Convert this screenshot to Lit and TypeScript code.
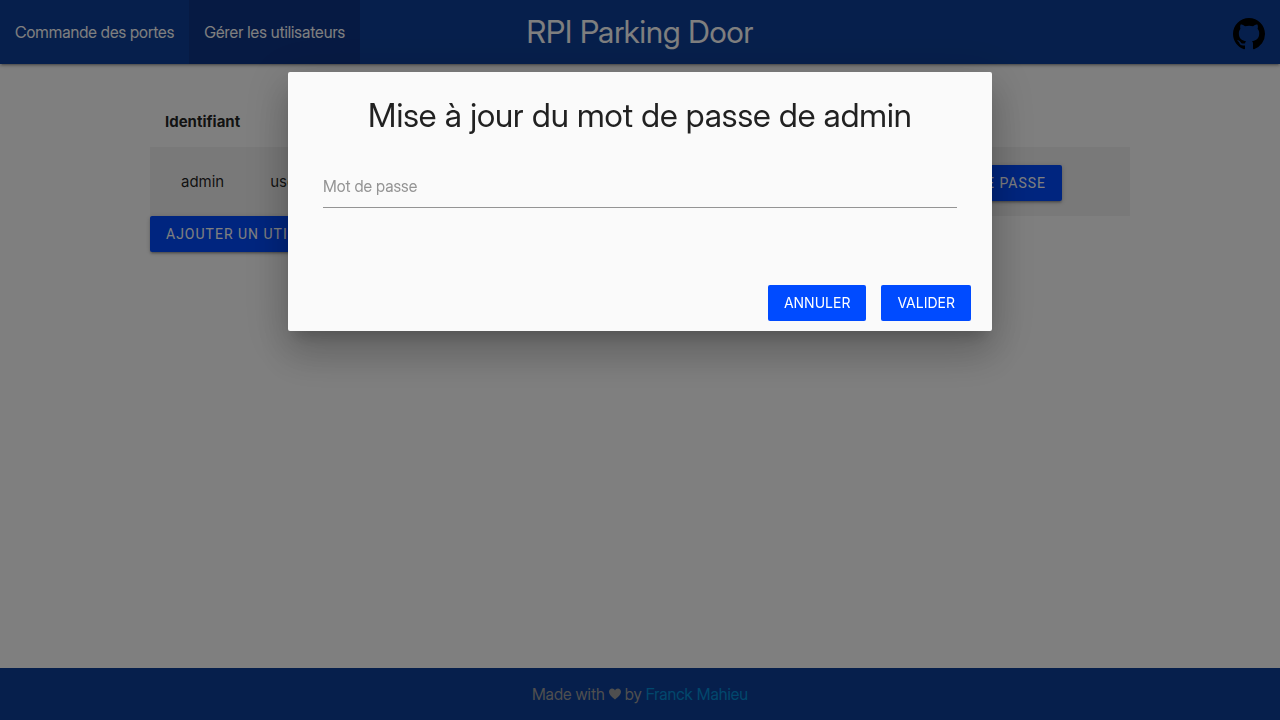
import { LitElement, html, css } from "lit";
import { customElement, state } from "lit/decorators.js";

@customElement("app-root")
export class AppRoot extends LitElement {
  static styles = css`
    :host {
      display: flex;
      flex-direction: column;
      min-height: 100vh;
      background: #fff;
      color: rgba(0, 0, 0, 0.87);
      font-family: "Inter Display", Inter, sans-serif;
      font-size: 16px;
      line-height: 22px;
    }
    a {
      color: inherit;
      text-decoration: none;
    }
    .nav {
      display: grid;
      grid-template-columns: 1fr auto 1fr;
      align-items: center;
      height: 64px;
      line-height: 64px;
      background: #0d3f98;
      color: #fff;
      box-shadow: 0 2px 2px rgba(0, 0, 0, 0.14), 0 3px 1px -2px rgba(0, 0, 0, 0.12), 0 1px 5px rgba(0, 0, 0, 0.2);
    }
    .links {
      display: flex;
    }
    .link {
      padding: 0 15px;
    }
    .link.active {
      background: rgba(16, 0, 48, 0.16);
    }
    .brand {
      font-size: 31px;
    }
    .github {
      display: flex;
      justify-self: end;
      padding: 4px 15px 0;
      color: #000;
    }
    .main {
      flex: 1;
      box-sizing: border-box;
      width: 100%;
      max-width: 1280px;
      margin: 0 auto;
      padding: 32px 150px 0;
    }
    .users {
      width: 100%;
      border-collapse: collapse;
      font-family: Inter, sans-serif;
      font-size: 15px;
      text-align: center;
    }
    .users th,
    .users td {
      padding: 15px;
      white-space: nowrap;
    }
    .users th {
      padding-bottom: 14px;
      font-weight: 700;
    }
    .users tbody tr {
      background: #f2f2f2;
    }
    .users td {
      height: 39px;
    }
    .users .actions {
      width: 100%;
      padding: 16px 68px 14px 15px;
      text-align: right;
    }
    .btn {
      height: 36px;
      padding: 0 16px;
      border: 0;
      border-radius: 2px;
      background: #004bff;
      color: #fff;
      font-family: Inter, sans-serif;
      font-size: 14px;
      line-height: 36px;
      text-transform: uppercase;
      cursor: pointer;
    }
    .raised {
      font-family: Roboto, sans-serif;
      letter-spacing: 1px;
      box-shadow: 0 2px 2px rgba(0, 0, 0, 0.14), 0 3px 1px -2px rgba(0, 0, 0, 0.12), 0 1px 5px rgba(0, 0, 0, 0.2);
    }
    .footer {
      padding: 15px;
      background: #0d3f98;
      color: #9e9e9e;
      text-align: center;
    }
    .footer a {
      color: #038fda;
    }
    .heart {
      width: 12px;
      height: 12px;
    }
    .overlay {
      position: fixed;
      inset: 0;
      background: rgba(0, 0, 0, 0.5);
    }
    .modal {
      width: 55%;
      margin: 10vh auto 0;
      border-radius: 2px;
      background: #fafafa;
      box-shadow: 0 24px 38px 3px rgba(0, 0, 0, 0.14), 0 9px 46px 8px rgba(0, 0, 0, 0.12), 0 11px 15px -7px rgba(0, 0, 0, 0.2);
    }
    .content {
      padding: 24px 35px;
    }
    .title {
      margin: 0 0 28px;
      font-size: 33px;
      font-weight: 400;
      line-height: 38px;
      text-align: center;
    }
    .field {
      display: block;
      box-sizing: border-box;
      width: 100%;
      height: 46px;
      padding: 2px 0 0;
      border: 0;
      border-bottom: 1px solid #949494;
      border-radius: 0;
      outline: 0;
      background: transparent;
      font: inherit;
    }
    .field::placeholder {
      color: #949494;
      opacity: 1;
    }
    .buttons {
      display: flex;
      justify-content: flex-end;
      gap: 15px;
      padding: 53px 21px 10px;
    }
  `;

  @state() private open = true;
  private users = [{ name: "admin", role: "user" }];

  private close = () => {
    this.open = false;
  };

  private show = () => {
    this.open = true;
  };

  render() {
    return html`
      <nav class="nav">
        <div class="links">
          <a class="link" href="#portes">Commande des portes</a>
          <a class="link active" href="#utilisateurs">Gérer les utilisateurs</a>
        </div>
        <a class="brand" href="#">RPI Parking Door</a>
        <a class="github" href="#github" aria-label="GitHub">
          <svg width="32" height="32" viewBox="0 0 16 16" fill="currentColor" aria-hidden="true">
            <path fill-rule="evenodd" d="M8 0C3.58 0 0 3.58 0 8c0 3.54 2.29 6.53 5.47 7.59.4.07.55-.17.55-.38 0-.19-.01-.82-.01-1.49-2.01.37-2.53-.49-2.69-.94-.09-.23-.48-.94-.82-1.13-.28-.15-.68-.52-.01-.53.63-.01 1.08.58 1.23.82.72 1.21 1.87.87 2.33.66.07-.52.28-.87.51-1.07-1.78-.2-3.64-.89-3.64-3.95 0-.87.31-1.59.82-2.15-.08-.2-.36-1.02.08-2.12 0 0 .67-.21 2.2.82.64-.18 1.32-.27 2-.27s1.36.09 2 .27c1.53-1.04 2.2-.82 2.2-.82.44 1.1.16 1.92.08 2.12.51.56.82 1.27.82 2.15 0 3.07-1.87 3.75-3.65 3.95.29.25.54.73.54 1.48 0 1.07-.01 1.93-.01 2.2 0 .21.15.46.55.38A8.01 8.01 0 0 0 16 8c0-4.42-3.58-8-8-8z" />
          </svg>
        </a>
      </nav>
      <main class="main">
        <table class="users">
          <thead>
            <tr><th>Identifiant</th><th></th><th></th></tr>
          </thead>
          <tbody>
            ${this.users.map(
              (u) => html`<tr>
                <td>${u.name}</td>
                <td>${u.role}</td>
                <td class="actions"><button class="btn raised" @click=${this.show}>Modifier le mot de passe</button></td>
              </tr>`
            )}
          </tbody>
        </table>
        <button class="btn raised">Ajouter un utilisateur</button>
      </main>
      <footer class="footer">
        Made with
        <svg class="heart" viewBox="0 0 12 12" fill="currentColor" role="img" aria-label="love"><path d="M6 11.6C4.8 10.3 0 7.5 0 3.8 0 1.9 1.4.6 3.1.6 4.4.6 5.4 1.3 6 2.4 6.6 1.3 7.6.6 8.9.6 10.6.6 12 1.9 12 3.8 12 7.5 7.2 10.3 6 11.6z" /></svg>
        by <a href="#franck">Franck Mahieu</a>
      </footer>
      ${this.open
        ? html`<div class="overlay">
            <form class="modal" role="dialog" aria-modal="true" aria-labelledby="title" @submit=${(e: Event) => e.preventDefault()}>
              <div class="content">
                <h4 class="title" id="title">Mise à jour du mot de passe de admin</h4>
                <input class="field" type="password" placeholder="Mot de passe" aria-label="Mot de passe" autocomplete="new-password" />
              </div>
              <div class="buttons">
                <button class="btn" type="button" @click=${this.close}>Annuler</button>
                <button class="btn" type="submit">Valider</button>
              </div>
            </form>
          </div>`
        : null}
    `;
  }
}
